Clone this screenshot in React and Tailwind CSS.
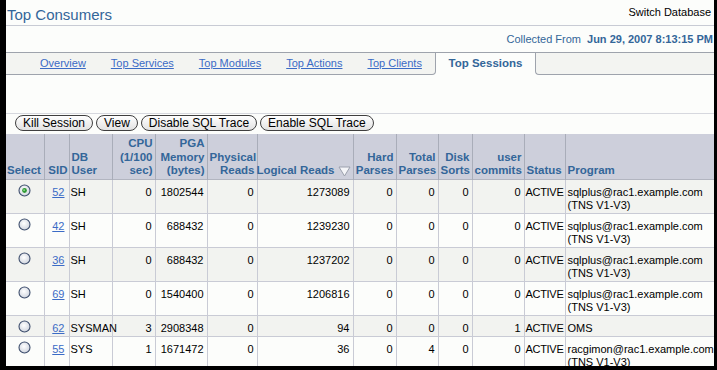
import React from 'react';

const rows = [
  { sid: '52', user: 'SH', cpu: '0', pga: '1802544', phys: '0', logical: '1273089', hard: '0', total: '0', disk: '0', commits: '0', program: ['sqlplus@rac1.example.com', '(TNS V1-V3)'], checked: true },
  { sid: '42', user: 'SH', cpu: '0', pga: '688432', phys: '0', logical: '1239230', hard: '0', total: '0', disk: '0', commits: '0', program: ['sqlplus@rac1.example.com', '(TNS V1-V3)'] },
  { sid: '36', user: 'SH', cpu: '0', pga: '688432', phys: '0', logical: '1237202', hard: '0', total: '0', disk: '0', commits: '0', program: ['sqlplus@rac1.example.com', '(TNS V1-V3)'] },
  { sid: '69', user: 'SH', cpu: '0', pga: '1540400', phys: '0', logical: '1206816', hard: '0', total: '0', disk: '0', commits: '0', program: ['sqlplus@rac1.example.com', '(TNS V1-V3)'] },
  { sid: '62', user: 'SYSMAN', cpu: '3', pga: '2908348', phys: '0', logical: '94', hard: '0', total: '0', disk: '0', commits: '1', program: ['OMS'] },
  { sid: '55', user: 'SYS', cpu: '1', pga: '1671472', phys: '0', logical: '36', hard: '0', total: '4', disk: '0', commits: '0', program: ['racgimon@rac1.example.com', '(TNS V1-V3)'] },
];

const tabs = ['Overview', 'Top Services', 'Top Modules', 'Top Actions', 'Top Clients'];
const buttons = ['Kill Session', 'View', 'Disable SQL Trace', 'Enable SQL Trace'];

function Radio({ checked, id }) {
  return (
    <svg width="13" height="13" viewBox="0 0 13 13" className="mx-auto block">
      <defs>
        <radialGradient id={id} cx="45%" cy="40%" r="60%">
          <stop offset="0%" stopColor="#ffffff" />
          <stop offset="100%" stopColor="#cfd4de" />
        </radialGradient>
      </defs>
      <circle cx="6.5" cy="6.5" r="5.5" fill={`url(#${id})`} stroke="#3f4f6e" strokeWidth="1.1" />
      {checked && <circle cx="6.5" cy="6.5" r="2.4" fill="#2f9a34" />}
      {checked && <circle cx="6.1" cy="6.1" r="0.9" fill="#9be49b" />}
    </svg>
  );
}

const th = 'align-bottom pb-[1px] pt-[3px] px-[2px] border-r border-[#a9adb9] font-bold text-[11.5px] text-[#336699] leading-[13.5px]';
const td = 'align-top pt-[6px] leading-[13px] border-r border-[#c9cbd5]';

export default function App() {
  return (
    <div className="w-[717px] h-[370px] bg-black pl-[6px] pr-[3px] pb-[4px]">
      <div className="w-full h-full bg-[#fcfdfb] overflow-hidden font-['Liberation_Sans',Arial,sans-serif] text-[11px] text-black">
        <div className="w-[716px]">
          {/* Title */}
          <div className="flex justify-between h-[26px] border-b border-[#c8cbd4]">
            <h1 className="pl-[1px] pt-[6px] text-[15px] leading-[17px] text-[#336699]">Top Consumers</h1>
            <span className="pt-[6px] pr-[11px] leading-[13px]">Switch Database</span>
          </div>

          {/* Collected from */}
          <div className="flex justify-end items-center gap-[6px] h-[26px] pt-[1px] pr-[9px] text-[#336699]">
            <span>Collected From</span>
            <span className="font-bold">Jun 29, 2007 8:13:15 PM</span>
          </div>

          {/* Tabs */}
          <div className="flex h-[23px]">
            <div className="flex items-center gap-[25px] w-[430px] pl-[34px] bg-[#f3f4f1] border-t border-b border-r border-[#9ea3ac] rounded-br-[4px]">
              {tabs.map((t) => (
                <a key={t} className="text-[#3b6bc6] underline">{t}</a>
              ))}
            </div>
            <div className="flex items-center justify-center w-[99px] border-t border-[#9ea3ac] font-bold text-[11.5px] text-[#336699]">
              Top Sessions
            </div>
            <div className="flex-1 bg-[#f3f4f1] border-t border-b border-l border-[#9ea3ac] rounded-bl-[4px]" />
          </div>

          {/* Buttons */}
          <div className="mt-[38px] border-t border-[#d6d8de] pt-[1px] pl-[9px] flex gap-[3px]">
            {buttons.map((b) => (
              <button
                key={b}
                className="h-[16px] px-[7px] rounded-[8px] border border-[#3f3f3f] bg-gradient-to-b from-white to-[#e2e2e2] text-[12px] leading-[14px] text-black"
              >
                {b}
              </button>
            ))}
          </div>

          {/* Table */}
          <table className="mt-[3px] w-[724px] table-fixed border-collapse">
            <colgroup>
              <col className="w-[38px]" />
              <col className="w-[25px]" />
              <col className="w-[43px]" />
              <col className="w-[43px]" />
              <col className="w-[52px]" />
              <col className="w-[50px]" />
              <col className="w-[96px]" />
              <col className="w-[43px]" />
              <col className="w-[42px]" />
              <col className="w-[34px]" />
              <col className="w-[52px]" />
              <col className="w-[41px]" />
              <col className="w-[165px]" />
            </colgroup>
            <thead>
              <tr className="h-[43px] bg-[#cdcfdb] border-b border-[#b2b5c0]">
                <th className={`${th} text-left pl-[1px]`}>Select</th>
                <th className={`${th} text-right pr-[1px]`}>SID</th>
                <th className={`${th} text-left`}>DB<br />User</th>
                <th className={`${th} text-right`}>CPU<br />(1/100<br />sec)</th>
                <th className={`${th} text-right`}>PGA<br />Memory<br />(bytes)</th>
                <th className={`${th} text-right`}>Physical<br />Reads</th>
                <th className={th}>
                  <div className="flex justify-end items-end gap-[3px] whitespace-nowrap">
                    <span>Logical Reads</span>
                    <svg width="13" height="11" viewBox="0 0 13 11" className="mb-[1px] shrink-0">
                      <polygon points="1,1 12,1 6.5,10" fill="#f4f5f8" stroke="#9ba0ad" strokeWidth="1" />
                    </svg>
                  </div>
                </th>
                <th className={`${th} text-right`}>Hard<br />Parses</th>
                <th className={`${th} text-right`}>Total<br />Parses</th>
                <th className={`${th} text-right`}>Disk<br />Sorts</th>
                <th className={`${th} text-right`}>user<br />commits</th>
                <th className={`${th} text-left`}>Status</th>
                <th className={`${th} text-left`}>Program</th>
              </tr>
            </thead>
            <tbody>
              {rows.map((r, i) => (
                <tr
                  key={r.sid}
                  className={`border-b border-[#c9cbd5] ${r.program.length > 1 ? 'h-[34px]' : 'h-[21px]'} ${i % 2 === 0 ? 'bg-[#f2f3f0]' : 'bg-[#fcfdfb]'}`}
                >
                  <td className="align-top pt-[4px] border-r border-[#c9cbd5]">
                    <Radio checked={r.checked} id={`rg${i}`} />
                  </td>
                  <td className={`${td} text-right pr-[4px]`}>
                    <a className="text-[#3b6bc6] underline">{r.sid}</a>
                  </td>
                  <td className={`${td} pl-[1px]`}>{r.user}</td>
                  <td className={`${td} text-right pr-[3px]`}>{r.cpu}</td>
                  <td className={`${td} text-right pr-[3px]`}>{r.pga}</td>
                  <td className={`${td} text-right pr-[3px]`}>{r.phys}</td>
                  <td className={`${td} text-right pr-[3px]`}>{r.logical}</td>
                  <td className={`${td} text-right pr-[3px]`}>{r.hard}</td>
                  <td className={`${td} text-right pr-[3px]`}>{r.total}</td>
                  <td className={`${td} text-right pr-[3px]`}>{r.disk}</td>
                  <td className={`${td} text-right pr-[3px]`}>{r.commits}</td>
                  <td className={`${td} pl-[1px] tracking-[-0.3px]`}>ACTIVE</td>
                  <td className={`${td} pl-[2px] whitespace-nowrap`}>
                    {r.program.map((p) => (
                      <div key={p}>{p}</div>
                    ))}
                  </td>
                </tr>
              ))}
            </tbody>
          </table>
        </div>
      </div>
    </div>
  );
}
